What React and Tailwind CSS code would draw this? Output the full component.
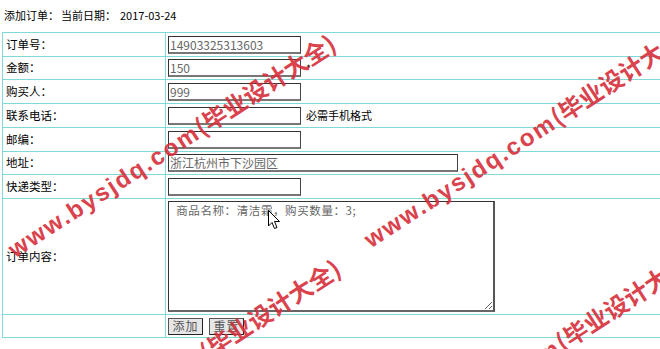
import React from "react";

const LINE = "border-[#80d8d8]";

function Cell({ children, h, label }) {
  return (
    <div
      className={`flex items-center border-r border-b border-[#80d8d8] ${h} ${
        label ? "pl-[3px] text-[11.5px] text-black" : "pl-[2px]"
      }`}
    >
      {children}
    </div>
  );
}

function Field({ w = "w-[133px]", value = "" }) {
  return (
    <input
      readOnly
      defaultValue={value}
      className={`${w} h-[18px] bg-white border border-[#333] border-b-2 border-b-[#777] border-r-[#444] px-[1px] text-[12px] leading-none text-[#666] outline-none font-['Noto_Sans_CJK_SC',sans-serif]`}
    />
  );
}

function Mark({ className }) {
  return (
    <div
      className={`absolute whitespace-nowrap origin-left rotate-[-33deg] text-[24px] leading-none font-bold text-[#d62f3a] opacity-90 font-['Noto_Sans_CJK_SC',sans-serif] pointer-events-none ${className}`}
    >
      <span className="tracking-[2px] font-['Liberation_Sans',sans-serif]">www.bysjdq.com</span>
      <span>(毕业设计大全)</span>
    </div>
  );
}

export default function App() {
  return (
    <div className="relative w-[660px] h-[349px] overflow-hidden bg-white font-['Noto_Sans_CJK_SC',sans-serif] text-black">
      <div className="h-[32px] flex items-center pl-[4px] pb-[2px] text-[11px]">
        <span>添加订单：</span>
        <span className="ml-[2px]">当前日期：</span>
        <span className="ml-[4px]">2017-03-24</span>
      </div>

      <div className={`ml-[2px] w-[680px] grid grid-cols-[163px_1fr] border-t border-l ${LINE}`}>
        <Cell label h="h-[24px]">订单号：</Cell>
        <Cell h="h-[24px]"><Field value="14903325313603" /></Cell>

        <Cell label h="h-[23px]">金额：</Cell>
        <Cell h="h-[23px]">
          <Field value="150" />
          <span className="ml-[5px] text-[11px]">*</span>
        </Cell>

        <Cell label h="h-[24px]">购买人：</Cell>
        <Cell h="h-[24px]"><Field value="999" /></Cell>

        <Cell label h="h-[24px]">联系电话：</Cell>
        <Cell h="h-[24px]">
          <Field />
          <span className="ml-[5px] text-[11px]">必需手机格式</span>
        </Cell>

        <Cell label h="h-[24px]">邮编：</Cell>
        <Cell h="h-[24px]"><Field /></Cell>

        <Cell label h="h-[23px]">地址：</Cell>
        <Cell h="h-[23px]"><Field w="w-[290px]" value="浙江杭州市下沙园区" /></Cell>

        <Cell label h="h-[24px]">快递类型：</Cell>
        <Cell h="h-[24px]"><Field /></Cell>

        <Cell label h="h-[116px]">订单内容：</Cell>
        <Cell h="h-[116px]">
          <textarea
            readOnly
            defaultValue=" 商品名称：清洁霜，购买数量：3;"
            className="w-[327px] h-[111px] mt-[-1px] bg-white border border-[#333] border-b-2 border-b-[#666] border-r-2 border-r-[#555] px-[4px] py-[1px] text-[11.5px] leading-[15px] tracking-[0.6px] text-[#666] outline-none font-['Noto_Sans_CJK_SC',sans-serif]"
          />
        </Cell>

        <Cell label h="h-[23px]"></Cell>
        <Cell h="h-[23px]">
          <button className="w-[35px] h-[17px] bg-[#e6e6e6] border border-[#555] border-r-[#222] border-b-[#222] text-[12px] leading-none text-[#555] tracking-[1px]">
            添加
          </button>
          <button className="ml-[6px] w-[35px] h-[17px] bg-[#e6e6e6] border border-[#555] border-r-[#222] border-b-[#222] text-[12px] leading-none text-[#555] tracking-[1px]">
            重置
          </button>
        </Cell>
      </div>

      <Mark className="left-[10px] top-[238px]" />
      <Mark className="left-[366px] top-[228px]" />
      <Mark className="left-[15px] top-[463px]" />
      <Mark className="left-[371px] top-[453px]" />

      <svg
        className="absolute left-[268px] top-[210px]"
        width="13"
        height="20"
        viewBox="0 0 13 20"
      >
        <path
          d="M0.5 0.5 L0.5 16 L4 12.5 L6.5 18.5 L9 17.5 L6.5 11.5 L11.5 11.5 Z"
          fill="#fff"
          stroke="#000"
          strokeWidth="1"
          strokeLinejoin="miter"
        />
      </svg>
    </div>
  );
}
